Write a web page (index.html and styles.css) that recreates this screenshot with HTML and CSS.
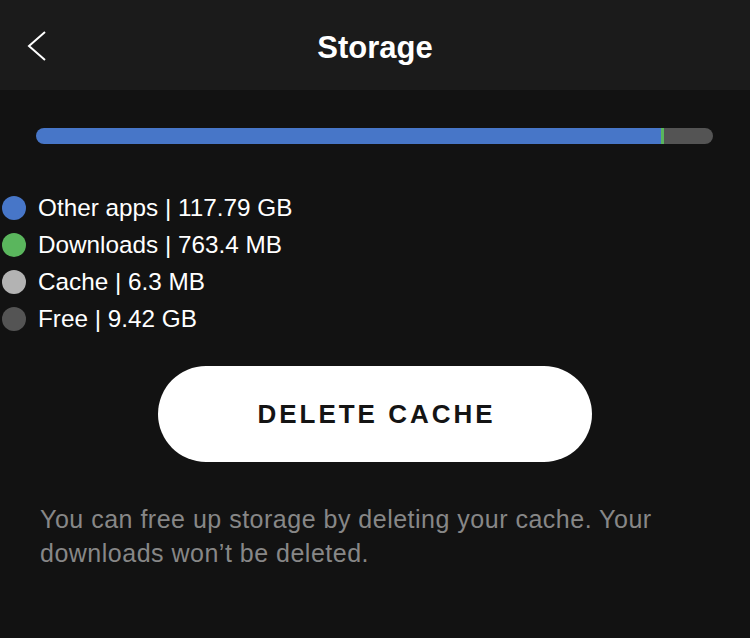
FILE: index.html
```html
<!DOCTYPE html>
<html lang="en">
<head>
<meta charset="utf-8">
<title>Storage</title>
<link rel="stylesheet" href="styles.css">
</head>
<body>
<header class="topbar">
  <div class="back">
    <svg width="20" height="30" viewBox="0 0 20 30" aria-hidden="true"><polyline points="18,1 2,15 18,29" fill="none" stroke="#ffffff" stroke-width="2"/></svg>
  </div>
  <h1 class="title">Storage</h1>
  <div></div>
</header>
<main class="content">
  <div class="bar">
    <div class="seg seg-other" style="width:625px"></div>
    <div class="seg seg-downloads" style="width:3px"></div>
    <div class="seg seg-free"></div>
  </div>
  <ul class="legend">
    <li class="legend-row"><span class="dot dot-other"></span>Other apps | 117.79 GB</li>
    <li class="legend-row"><span class="dot dot-downloads"></span>Downloads | 763.4 MB</li>
    <li class="legend-row"><span class="dot dot-cache"></span>Cache | 6.3 MB</li>
    <li class="legend-row"><span class="dot dot-free"></span>Free | 9.42 GB</li>
  </ul>
  <div class="actions">
    <button class="delete-btn">DELETE CACHE</button>
  </div>
  <p class="note">You can free up storage by deleting your cache. Your downloads won’t be deleted.</p>
</main>
</body>
</html>
```
FILE: styles.css
```css
* { box-sizing: border-box; }
html, body {
  margin: 0;
  padding: 0;
  background: #121212;
  width: 750px;
  height: 638px;
  overflow: hidden;
  font-family: "Liberation Sans", Arial, sans-serif;
  color: #ffffff;
}
.topbar {
  height: 90px;
  background: #1b1b1b;
  display: grid;
  grid-template-columns: 1fr auto 1fr;
  align-items: center;
}
.back {
  padding-left: 27px;
  display: flex;
  align-items: center;
  height: 30px;
  margin-top: 2px;
}
.title {
  margin: 0;
  font-size: 31px;
  font-weight: 700;
  color: #ffffff;
  line-height: 1;
  margin-top: 4px;
}
.content {
  padding-top: 38px;
}
.bar {
  margin-left: 36px;
  width: 677px;
  height: 16px;
  border-radius: 8px;
  overflow: hidden;
  display: flex;
}
.seg { height: 100%; }
.seg-other { background: #4776c8; }
.seg-downloads { background: #5ab65d; }
.seg-free { flex: 1; background: #545454; }
.legend {
  list-style: none;
  margin: 45px 0 0 0;
  padding: 0 0 0 2px;
}
.legend-row {
  height: 37px;
  display: flex;
  align-items: center;
  gap: 12px;
  font-size: 24.3px;
  color: #ffffff;
}
.dot {
  width: 24px;
  height: 24px;
  border-radius: 50%;
  flex: none;
}
.dot-other { background: #4776c8; }
.dot-downloads { background: #5ab65d; }
.dot-cache { background: #b3b3b3; }
.dot-free { background: #545454; }
.actions {
  display: flex;
  justify-content: center;
  margin-top: 29px;
}
.delete-btn {
  width: 434px;
  height: 96px;
  border: none;
  border-radius: 48px;
  background: #ffffff;
  color: #141414;
  font-family: "Liberation Sans", Arial, sans-serif;
  font-weight: 700;
  font-size: 26px;
  letter-spacing: 3px;
  padding: 0 0 0 3px;
}
.note {
  margin: 40px 0 0 40px;
  width: 670px;
  font-size: 25px;
  letter-spacing: 0.5px;
  line-height: 34px;
  color: #878787;
}
```
